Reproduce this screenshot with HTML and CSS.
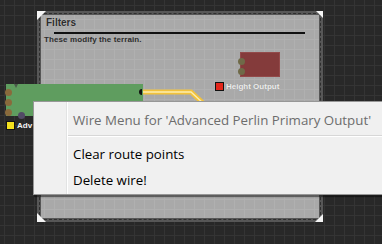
FILE: index.html
```html
<!doctype html>
<html lang="en">
<head>
  <meta charset="UTF-8">
  <title>Node Graph</title>
  <link rel="stylesheet" href="styles.css">
</head>
<body>
  <div class="canvas">
    <div class="group">
      <span class="corner tl"></span>
      <span class="corner tr"></span>
      <span class="corner bl"></span>
      <span class="corner br"></span>
      <div class="group-title">Filters</div>
      <div class="group-rule"></div>
      <div class="group-desc">These modify the terrain.</div>
      <div class="node red">
        <span class="port" style="top: 5px"></span>
        <span class="port" style="top: 15px"></span>
      </div>
      <div class="socket-label out">
        <span class="socket red-sq"></span>Height Output
      </div>
    </div>

    <div class="node green">
      <span class="notch"></span>
      <span class="port" style="top: 5px"></span>
      <span class="port" style="top: 15px"></span>
      <span class="port" style="top: 25px"></span>
      <span class="knob"></span>
    </div>
    <div class="socket-label adv">
      <span class="socket yellow-sq"></span>Adv
    </div>

    <svg class="wire" width="382" height="244" viewBox="0 0 382 244">
      <path d="M143 92 H191 L204 104" fill="none" stroke="#f2c23c" stroke-width="5"/>
      <path d="M143 92 H191 L204 104" fill="none" stroke="#fdeeb0" stroke-width="1.4"/>
      <path d="M142 89 A3 3 0 0 0 142 95 Z" fill="#111"/>
    </svg>

    <div class="menu">
      <div class="menu-item disabled">Wire Menu for 'Advanced Perlin Primary Output'</div>
      <div class="menu-sep"></div>
      <div class="menu-item">Clear route points</div>
      <div class="menu-item">Delete wire!</div>
    </div>
  </div>
</body>
</html>
```

FILE: styles.css
```css
body {
  margin: 0;
  background: #282828;
  font-family: 'Liberation Sans', Arial, sans-serif;
}
.canvas {
  position: relative;
  width: 382px;
  height: 244px;
  overflow: hidden;
  background-color: #282828;
  background-image:
    linear-gradient(#343434 1px, transparent 1px),
    linear-gradient(90deg, #343434 1px, transparent 1px);
  background-size: 10px 10px;
  background-position: 4px 5px;
}
.group {
  position: absolute;
  left: 37px;
  top: 11px;
  width: 278px;
  height: 203px;
  border: 4px solid #575757;
  background-color: #a9a9a9;
  background-image:
    linear-gradient(#b0b0b0 1px, transparent 1px),
    linear-gradient(90deg, #b0b0b0 1px, transparent 1px);
  background-size: 10px 10px;
  background-position: 3px 4px;
}
.group::before {
  content: "";
  position: absolute;
  inset: -2px;
  border: 1px dashed #2e2e2e;
}
.corner {
  position: absolute;
  width: 9px;
  height: 9px;
  background: #f4f4f4;
}
.corner.tl { left: -4px; top: -4px; clip-path: polygon(0 0, 100% 0, 0 100%); }
.corner.tr { right: -4px; top: -4px; width: 7px; height: 7px; clip-path: polygon(0 0, 100% 0, 100% 100%); }
.corner.bl { left: -4px; bottom: -4px; clip-path: polygon(0 0, 100% 100%, 0 100%); }
.corner.br { right: -4px; bottom: -4px; width: 8px; height: 8px; clip-path: polygon(100% 0, 100% 100%, 0 100%); }
.group-title {
  padding: 2px 0 0 5px;
  font-size: 10px;
  font-weight: bold;
  color: #2d2d2d;
  text-shadow: 0 0 1px #c8c8c8;
  line-height: 11px;
}
.group-rule {
  margin: 4px 14px 0 13px;
  height: 2px;
  background: #111;
}
.group-desc {
  padding: 1px 0 0 3px;
  font-size: 8px;
  font-weight: bold;
  color: #2d2d2d;
  line-height: 9px;
  letter-spacing: 0.1px;
}
.node {
  position: absolute;
}
.node.red {
  left: 199px;
  top: 37px;
  width: 40px;
  height: 25px;
  background: #843b3b;
  border: 1px solid #934a4a;
  box-sizing: border-box;
}
.port {
  position: absolute;
  left: -3px;
  width: 7px;
  height: 7px;
  border-radius: 50%;
  background: #7d6c46;
}
.node.red .port { background: #6f6a48; }
.socket-label {
  position: absolute;
  display: flex;
  align-items: center;
  gap: 2px;
  font-size: 8px;
  font-weight: bold;
  line-height: 9px;
}
.socket-label.out {
  left: 174px;
  top: 67px;
  color: #ececec;
  text-shadow: 0 0 1px #8a8a8a;
}
.socket {
  width: 7px;
  height: 7px;
  border: 1px solid #111;
}
.red-sq { background: #e3261b; }
.yellow-sq { background: #f2e01e; }
.node.green {
  left: 6px;
  top: 84px;
  width: 137px;
  height: 32px;
  background: #5f9d5f;
}
.node.green .port { left: -1px; background: #8a6a3c; }
.notch {
  position: absolute;
  left: 8px;
  top: 0;
  width: 4px;
  height: 4px;
  background: #4a5a4a;
  clip-path: polygon(0 0, 100% 0, 50% 100%);
}
.knob {
  position: absolute;
  left: 12px;
  bottom: -3px;
  width: 7px;
  height: 7px;
  border-radius: 50%;
  background: #524a66;
}
.socket-label.adv {
  left: 6px;
  top: 121px;
  color: #f2f2f2;
}
.wire {
  position: absolute;
  left: 0;
  top: 0;
}
.menu {
  position: absolute;
  left: 33px;
  top: 101px;
  width: 360px;
  height: 92px;
  background: #f0f0f0;
  border: 1px solid #979797;
  box-shadow: 1px 2px 1px rgba(0, 0, 0, 0.45);
  font-family: 'Open Sans', 'Noto Sans', sans-serif;
  font-size: 13.3px;
  color: #000;
}
.menu::before {
  content: "";
  position: absolute;
  left: 32px;
  top: 0;
  bottom: 0;
  width: 1px;
  background: #e2e3e3;
  border-right: 1px solid #fff;
}
.menu-item {
  height: 26px;
  line-height: 26px;
  padding-left: 39px;
  white-space: nowrap;
}
.menu-item.disabled {
  color: #6d6d6d;
  height: 33px;
  line-height: 36px;
}
.menu-sep {
  margin: 0 0 4px 34px;
  height: 1px;
  background: #d7d7d7;
  border-bottom: 1px solid #fff;
}
```
